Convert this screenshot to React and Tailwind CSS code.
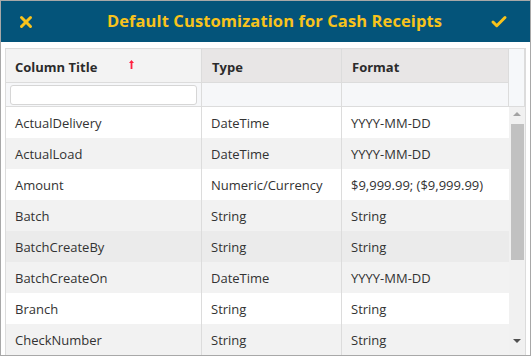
import React from "react";
import { X, Check } from "lucide-react";

const rows = [
  { title: "ActualDelivery", type: "DateTime", format: "YYYY-MM-DD" },
  { title: "ActualLoad", type: "DateTime", format: "YYYY-MM-DD" },
  { title: "Amount", type: "Numeric/Currency", format: "$9,999.99; ($9,999.99)" },
  { title: "Batch", type: "String", format: "String" },
  { title: "BatchCreateBy", type: "String", format: "String" },
  { title: "BatchCreateOn", type: "DateTime", format: "YYYY-MM-DD" },
  { title: "Branch", type: "String", format: "String" },
  { title: "CheckNumber", type: "String", format: "String" },
];

// row shading as in the grid: odd rows striped, one row hovered
const rowBg = (i) => {
  if (i === 4) return "bg-[#ebebeb]";
  return i % 2 === 0 ? "bg-white" : "bg-[#f2f2f2]";
};

function App() {
  return (
    <div
      className="w-[531px] h-[356px] border border-[#a8a8a8] bg-white flex flex-col overflow-hidden"
      style={{ fontFamily: '"Open Sans", "Noto Sans", sans-serif' }}
    >
      {/* Title bar */}
      <div className="h-[41px] shrink-0 bg-[#04547a] flex items-center pl-[16px] pr-[22px] text-[#f8c31c]">
        <X size={18} strokeWidth={4} />
        <span className="flex-1 text-center pl-[24px] text-[16.5px] font-bold tracking-[0.1px] -mt-[1px]">
          Default Customization for Cash Receipts
        </span>
        <Check size={18} strokeWidth={4} />
      </div>

      <div className="flex-1 pt-[6px] px-[4px] pb-[3px] flex">
        <div className="flex-1 border border-[#dcdcdc] flex flex-col overflow-hidden text-[13px] text-[#333]">
          {/* Header + filter */}
          <div className="flex shrink-0 border-b border-[#dcdcdc]">
            <div className="w-[503px] flex flex-col">
              <div className="h-[34px] flex border-b border-[#dcdcdc] font-bold text-[#2b2b2b]">
                <div className="w-[196px] bg-[#f3f3f3] border-r border-[#dcdcdc] flex items-center pl-[9px] pt-[4px] relative">
                  Column Title
                  {/* sort indicator */}
                  <svg className="absolute left-[123px] top-[11px]" width="5" height="9" viewBox="0 0 5 9">
                    <path d="M2.5 0 L5 3 L3.4 3 L3.4 9 L1.6 9 L1.6 3 L0 3 Z" fill="#ff2040" />
                  </svg>
                </div>
                <div className="w-[140px] bg-[#e8e6e6] border-r border-[#dcdcdc] flex items-center pl-[10px] pt-[4px]">
                  Type
                </div>
                <div className="flex-1 bg-[#e8e6e6] border-r border-[#dcdcdc] flex items-center pl-[10px] pt-[4px]">
                  Format
                </div>
              </div>
              <div className="h-[23px] flex bg-[#f6f7f9]">
                <div className="w-[196px] border-r border-[#dcdcdc] flex items-center px-[4px]">
                  <div className="w-full h-[20px] bg-white border border-[#d6d6d6] rounded-[3px]"></div>
                </div>
                <div className="w-[140px] border-r border-[#dcdcdc]"></div>
                <div className="flex-1 border-r border-[#dcdcdc]"></div>
              </div>
            </div>
            <div className="flex-1 bg-[#f6f8fa] border-r border-[#dcdcdc]"></div>
          </div>

          {/* Body */}
          <div className="flex-1 flex overflow-hidden">
            <div className="w-[503px] flex flex-col">
              {rows.map((r, i) => (
                <div key={r.title} className={`h-[31px] shrink-0 flex ${rowBg(i)}`}>
                  <div className="w-[196px] border-r border-[#dcdcdc] flex items-center pl-[9px] pt-[3px]">
                    {r.title}
                  </div>
                  <div className="w-[140px] border-r border-[#dcdcdc] flex items-center pl-[9px] pt-[3px]">
                    {r.type}
                  </div>
                  <div className="flex-1 flex items-center pl-[9px] pt-[3px]">{r.format}</div>
                </div>
              ))}
            </div>
            {/* Scrollbar */}
            <div className="flex-1 bg-[#f1f1f1] flex flex-col items-center">
              <div className="h-[14px] w-full flex items-center justify-center">
                <div className="w-0 h-0 border-l-[4px] border-r-[4px] border-b-[4px] border-l-transparent border-r-transparent border-b-[#a3a3a3]"></div>
              </div>
              <div className="w-[13px] h-[136px] bg-[#c1c1c1] mt-[3px]"></div>
              <div className="flex-1"></div>
              <div className="h-[18px] w-full flex items-start justify-center pt-[2px]">
                <div className="w-0 h-0 border-l-[4px] border-r-[4px] border-t-[4px] border-l-transparent border-r-transparent border-t-[#505050]"></div>
              </div>
            </div>
          </div>
        </div>
      </div>
    </div>
  );
}

export default App;
